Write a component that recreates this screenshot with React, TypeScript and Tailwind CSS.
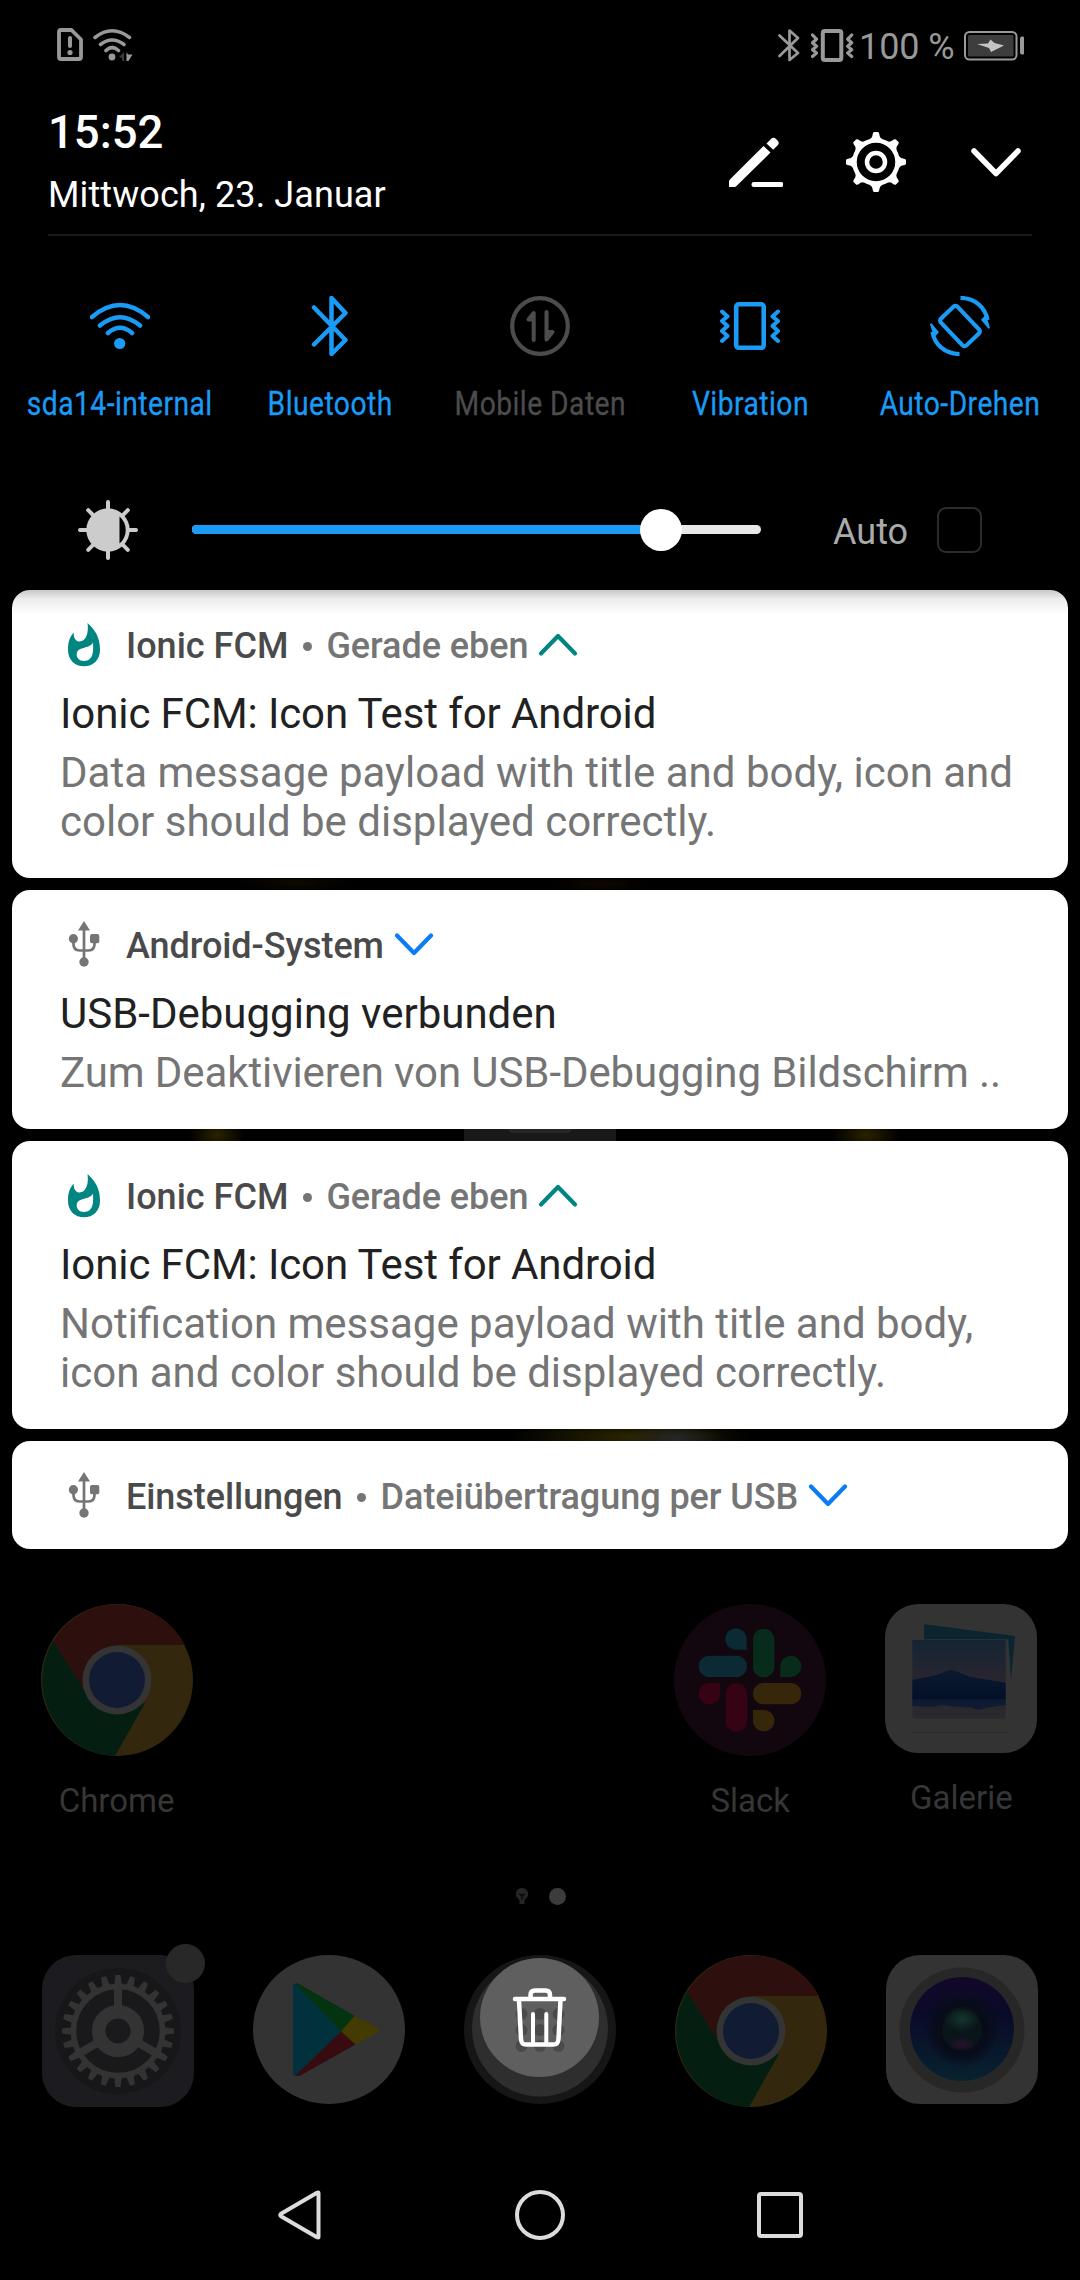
import React from "react";

function StatusBar() {
  return (
    <div className="flex h-[92px] shrink-0 items-center pl-[57px] pr-14 text-[#999]">
      <svg width="26" height="34" viewBox="57 28 26 34" fill="none" stroke="currentColor" className="-mt-0.5">
        <path d="M61 30h10.5L81 39.5V57a2 2 0 0 1-2 2H61a2 2 0 0 1-2-2V32a2 2 0 0 1 2-2z" strokeWidth="3.8" strokeLinejoin="round" />
        <path d="M70 38v8" strokeWidth="4" strokeLinecap="round" />
        <circle cx="70" cy="52.5" r="2.6" fill="currentColor" stroke="none" />
      </svg>
      <svg width="40" height="34" viewBox="93 28 40 34" fill="none" stroke="currentColor" strokeWidth="3.6" strokeLinecap="round" className="-mt-0.5 ml-2.5">
        <path d="M95 37.500Q112 24 129.500 37.500M100.500 44.500Q112 35.500 124 44.500M106 50.500Q112 44.500 118.500 50.500" />
        <circle cx="112" cy="57" r="3.400" fill="currentColor" stroke="none" />
        <path d="M124 52v9h-2v-3l-3-1z" fill="#3a3a3a" stroke="none" />
        <path d="M126.500 52.500l1.800 2h4.200l-4 6.500h-2z" fill="currentColor" stroke="none" />
      </svg>
      <div className="ml-auto flex items-center">
        <svg width="22" height="34" viewBox="778 28 22 34" fill="none" stroke="currentColor" strokeWidth="2.700" strokeLinejoin="round" strokeLinecap="round" className="-mt-0.5">
          <path d="M779.500 35.500L798 53l-8.500 7V30.500L798 38l-18.500 18" />
        </svg>
        <svg width="43" height="34" viewBox="811 28 43 34" fill="none" stroke="currentColor" strokeWidth="3.200" strokeLinecap="round" strokeLinejoin="round" className="-mt-0.5 ml-[11px]">
          <rect x="822.800" y="31" width="18.500" height="29" rx="2" strokeWidth="4" />
          <path d="M812.500 35l4 4.200-4 3.500 4 3.600-4 3.500 4 3.200-4 3.500M851.700 35l-4 4.200 4 3.500-4 3.600 4 3.500-4 3.200 4 3.500" />
        </svg>
        <span className="ml-[5px] w-[105px] whitespace-nowrap pt-0.5 text-[36px] leading-[48px] tracking-[-0.1px]">100 %</span>
        <svg width="60" height="30" viewBox="964 31 60 30" fill="none">
          <rect x="965" y="32" width="51.500" height="27.500" rx="4.500" stroke="currentColor" strokeWidth="2" />
          <rect x="968" y="35" width="45.500" height="21.500" rx="1.500" fill="#3d3d3d" />
          <path d="M977 44l11-.5 2.500-4 4 3.500 9.500 2.500-13 6.500-2-4z" fill="#c4c4c4" />
          <rect x="1020" y="36.500" width="4.500" height="18" rx="2" fill="currentColor" />
        </svg>
      </div>
    </div>
  );
}

function Header() {
  return (
    <div className="mx-12 flex h-[144px] shrink-0 border-b-2 border-[#1a1a1a] text-white">
      <div className="pt-[13px]">
        <div className="text-[45.500px] font-medium leading-[56px]">15:52</div>
        <div className="mt-2.5 whitespace-nowrap text-[36px] leading-[48px] tracking-[0.1px]">Mittwoch, 23. Januar</div>
      </div>
      <div className="ml-auto mr-[11px] mt-9 flex h-[68px]">
        <svg width="54" height="68" viewBox="729 128 54 68" fill="currentColor">
          <path d="M763.500 146l7 6.500-34 33.500a3 3 0 0 1-2 .9h-5.500v-5.500a3 3 0 0 1 .9-2z" />
          <path d="M766.500 143.500l4.500-4.500a3.500 3.500 0 0 1 5 0l1.500 1.500a3.500 3.500 0 0 1 0 5l-4.300 4.300z" />
          <rect x="751.500" y="182" width="32" height="5" rx="2.300" />
        </svg>
        <svg width="60" height="68" viewBox="846 128 60 68" className="ml-[63px]">
          <g fill="currentColor">
            {[0, 45, 90, 135, 180, 225, 270, 315].map((a) => (
              <path key={a} transform={`rotate(${a} 876 162)`} d="M868.500 139.500q4-1 4.200-5.500l.5-1.200a1 1 0 0 1 1-.8h3.600a1 1 0 0 1 1 .8l.5 1.200q.2 4.500 4.200 5.500z" />
            ))}
          </g>
          <circle cx="876" cy="162" r="21.500" fill="#000" stroke="currentColor" strokeWidth="4.500" />
          <circle cx="876" cy="162" r="9" fill="none" stroke="currentColor" strokeWidth="4.500" />
        </svg>
        <svg width="50" height="68" viewBox="971 128 50 68" fill="none" stroke="currentColor" strokeWidth="5.500" strokeLinecap="round" strokeLinejoin="round" className="ml-[65px]">
          <path d="M974 151l22 22.500L1018 151" />
        </svg>
      </div>
    </div>
  );
}

const tiles = [
  {
    label: "sda14-internal",
    on: true,
    icon: (
      <svg width="60" height="60" viewBox="90 296 60 60" fill="none" stroke="currentColor" strokeWidth="4.500" strokeLinecap="round">
        <path d="M92 317Q120 293 148 317M100 325.500Q120 309 140 325.500M108 333Q120 322.500 132 333" />
        <circle cx="119.700" cy="343.500" r="5.600" fill="currentColor" stroke="none" />
      </svg>
    ),
  },
  {
    label: "Bluetooth",
    on: true,
    icon: (
      <svg width="60" height="60" viewBox="300 296 60 60" fill="none" stroke="currentColor" strokeWidth="4.500" strokeLinecap="round" strokeLinejoin="round">
        <path d="M314 307.500L345.500 340l-14 14V298l14 15L314 344.500" />
      </svg>
    ),
  },
  {
    label: "Mobile Daten",
    on: false,
    icon: (
      <svg width="60" height="60" viewBox="510 296 60 60" fill="none" stroke="currentColor" strokeWidth="4" strokeLinecap="round" strokeLinejoin="round">
        <circle cx="540" cy="326" r="27.800" strokeWidth="4.200" />
        <path d="M533.700 340v-27l-5.200 6.500h5M546.500 312v27.500l6-7.500h-6" />
      </svg>
    ),
  },
  {
    label: "Vibration",
    on: true,
    icon: (
      <svg width="60" height="60" viewBox="720 296 60 60" fill="none" stroke="currentColor" strokeWidth="4" strokeLinecap="round" strokeLinejoin="round">
        <rect x="736.200" y="304.300" width="27.500" height="43.500" rx="2.500" strokeWidth="4.600" />
        <path d="M722 311.500l5.500 5-5.500 4.500 5.500 5-5.500 5 5.500 5-5.500 5M778 311.500l-5.500 5 5.500 4.500-5.500 5 5.500 5-5.500 5 5.500 5" />
      </svg>
    ),
  },
  {
    label: "Auto-Drehen",
    on: true,
    icon: (
      <svg width="60" height="60" viewBox="930 296 60 60" fill="none" stroke="currentColor" strokeWidth="4.200">
        <rect x="948.500" y="307.500" width="23" height="37" rx="3" transform="rotate(-43.500 960 326)" />
        <path d="M960.500 298c14.500 0 25 9.500 27 22M959.500 354c-14.500 0-25-9.500-27-22" />
        <path d="M986 314.500l4 13.500-1.500.8-7.500-9zM934 337.500l-4-13.500 1.500-.8 7.500 9z" fill="currentColor" stroke="none" />
      </svg>
    ),
  },
];

function QuickTiles() {
  return (
    <div className="grid shrink-0 grid-cols-5 px-[15px] pt-[60px]">
      {tiles.map((t) => (
        <div key={t.label} className={t.on ? "flex flex-col items-center text-[#1a9bf5]" : "flex flex-col items-center text-[#4c4c4c]"}>
          {t.icon}
          <span className="mt-7 origin-center scale-x-[0.855] whitespace-nowrap text-[33px] leading-10 tracking-[0.55px] [-webkit-text-stroke:0.3px_currentColor]">{t.label}</span>
        </div>
      ))}
    </div>
  );
}

function Brightness() {
  return (
    <div className="mb-[30px] mt-[76px] flex h-[60px] shrink-0 items-center pl-[78px]">
      <svg width="60" height="60" viewBox="78 500 60 60">
        <g stroke="#ccc" strokeWidth="4" strokeLinecap="round">
          {[0, 45, 90, 135, 180, 225, 270, 315].map((a) => (
            <path key={a} transform={`rotate(${a} 108 530)`} d="M108 502v8" />
          ))}
        </g>
        <circle cx="108" cy="530" r="21.700" fill="#ccc" />
        <path d="M119.500 516.500a17.700 17.700 0 0 1 0 27z" fill="#000" />
      </svg>
      <div className="relative -mt-px ml-[54px] h-[9px] w-[569px] rounded-full bg-[#e8e8e8]">
        <div className="h-full w-[469px] rounded-full bg-[#1a9bf5]" />
        <div className="absolute left-[448px] top-[-16px] size-[42px] rounded-full bg-white" />
      </div>
      <span className="ml-[72px] w-[104px] pt-[3px] text-[36px] leading-[48px] text-[#aaa]">Auto</span>
      <div className="h-[46px] w-[45px] rounded-[9px] border-2 border-[#2c2c2c]" />
    </div>
  );
}

function Flame() {
  return (
    <svg width="32" height="44" viewBox="68 623 32 44" className="-mt-0.5">
      <path d="M87.500 623C99 633 100 643 100 650c0 10-7 16.300-16 16.300S68 660 68 650c0-7 1-12 5.700-17.500C73.500 637 75 641 79 641.500c7 .5 10-9 8.500-18.500z" fill="#008581" />
      <path d="M93 642.500c.5 9 .5 18-9 18.500-5 0-7.600-3.500-7.300-7 .8-8 12.300-4.500 16.300-11.500z" fill="#fff" />
    </svg>
  );
}

function Usb() {
  return (
    <svg width="32" height="48" viewBox="68 920 32 48" fill="#757575" className="-mt-1">
      <path d="M84 921l6 9.500H78z" />
      <path d="M84 928v34M73.500 939v5q0 6.500 6 6.500h9q6 0 6-6.500v-5" fill="none" stroke="#757575" strokeWidth="2.700" />
      <circle cx="84" cy="962" r="4.700" />
      <circle cx="73.400" cy="938.700" r="4.600" />
      <rect x="90" y="934" width="9.300" height="9.300" rx="2" />
    </svg>
  );
}

function Chevron({ up }: { up?: boolean }) {
  return (
    <svg width="40" height="24" viewBox="0 0 40 24" fill="none" stroke={up ? "#008581" : "#0a7cf5"} strokeWidth="4.200" strokeLinecap="round" strokeLinejoin="round" className="-mt-0.5 ml-2.5">
      <path d={up ? "M3 20.500L20 3l17 17.500" : "M3 2.500L20 20 37 2.500"} />
    </svg>
  );
}

type NoteProps = { icon: React.ReactNode; app: string; info?: string; up?: boolean; title?: string; lines?: string[]; shaded?: boolean; tight?: boolean };

function Note({ icon, app, info, up, title, lines, shaded, tight }: NoteProps) {
  return (
    <div
      className={
        shaded
          ? "mx-3 shrink-0 rounded-[18px] bg-white bg-[linear-gradient(#c8c8c8,#ececec_9px,#fff_24px)] px-12 pb-8 pt-8"
          : title
            ? "mx-3 shrink-0 rounded-[18px] bg-white px-12 pb-8 pt-8"
            : "mx-3 shrink-0 rounded-[18px] bg-white px-12 pb-7 pt-8"
      }
    >
      <div className="flex h-12 items-center whitespace-nowrap pl-2 text-[36px] font-medium leading-[48px] text-[#757575]">
        {icon}
        <span className={up ? "ml-[26px] text-[#4a4a4a]" : "ml-[26px] tracking-[-0.07px] text-[#4a4a4a]"}>{app}</span>
        {info && <span className="mx-[14.500px] size-[9px] rounded-full bg-[#757575]" />}
        {info && <span className="tracking-[-0.06px]">{info}</span>}
        <Chevron up={up} />
      </div>
      {title && (
        <div className={up ? "mt-4 whitespace-nowrap text-[42px] leading-[56px] tracking-[-0.1px] text-[#212121]" : "mt-4 whitespace-nowrap text-[42px] leading-[56px] text-[#212121]"}>{title}</div>
      )}
      {lines && (
        <div className={tight ? "mt-1.5 whitespace-nowrap text-[42px] leading-[49px] tracking-[-0.09px] text-[#757575]" : "mt-1.5 whitespace-nowrap text-[42px] leading-[49px] text-[#757575]"}>
          {lines.map((l) => (
            <div key={l}>{l}</div>
          ))}
        </div>
      )}
    </div>
  );
}

function Notifications() {
  return (
    <div className="flex shrink-0 flex-col">
      <Note shaded up icon={<Flame />} app="Ionic FCM" info="Gerade eben" title="Ionic FCM: Icon Test for Android" lines={["Data message payload with title and body, icon and", "color should be displayed correctly."]} />
      <div className="h-3 bg-[radial-gradient(ellipse_60px_10px_at_295px_4px,#0e0900,transparent),radial-gradient(ellipse_50px_10px_at_600px_6px,#0e0700,transparent)]" />
      <Note tight icon={<Usb />} app="Android-System" title="USB-Debugging verbunden" lines={["Zum Deaktivieren von USB-Debugging Bildschirm .."]} />
      <div className="flex h-3 justify-center bg-[radial-gradient(ellipse_28px_18px_at_217px_6px,#2a2200,transparent),radial-gradient(ellipse_34px_18px_at_866px_6px,#2a2200,transparent)]">
        <div className="flex w-[152px] justify-center bg-[#191919]">
          <div className="h-1 w-[62px] rounded-b bg-[#262626]" />
        </div>
      </div>
      <Note up icon={<Flame />} app="Ionic FCM" info="Gerade eben" title="Ionic FCM: Icon Test for Android" lines={["Notification message payload with title and body,", "icon and color should be displayed correctly."]} />
      <div className="h-3 bg-[radial-gradient(ellipse_50px_14px_at_675px_9px,#262626,transparent),radial-gradient(ellipse_120px_22px_at_630px_8px,#2a2500,transparent)]" />
      <Note icon={<Usb />} app="Einstellungen" info="Dateiübertragung per USB" />
    </div>
  );
}

function Chrome() {
  return (
    <svg width="152" height="152" viewBox="-76 -76 152 152">
      <circle r="76" fill="#33270d" />
      <path d="M-64-39A76 76 0 0 1 68-35H0L-34 8z" fill="#2d0f0e" />
      <path d="M-64-39A76 76 0 0 0-2 76L28 23-17 30-34 8z" fill="#041f12" />
      <circle r="34.500" fill="#343434" />
      <circle r="28" fill="#111b33" />
    </svg>
  );
}

function Slack() {
  return (
    <svg width="152" height="152" viewBox="102 72 456 456">
      <circle cx="330" cy="300" r="228" fill="#12060f" />
      <g fill="#0b2a33">
        <path d="M320 209h-31a32 32 0 1 1 31-32z" />
        <rect x="176" y="227" width="145" height="64" rx="32" />
      </g>
      <g fill="#072c1b">
        <rect x="339" y="146" width="64" height="146" rx="32" />
        <path d="M421 291v-32a31.500 32 0 1 1 31 32z" />
      </g>
      <g fill="#360314">
        <path d="M240 309v32a32 32 0 1 1-32-32z" />
        <rect x="257" y="309" width="64" height="146" rx="32" />
      </g>
      <g fill="#37270a">
        <rect x="339" y="309" width="145" height="64" rx="32" />
        <path d="M339 390h32a32 32 0 1 1-32 32z" />
      </g>
    </svg>
  );
}

function Gallery() {
  return (
    <svg width="152" height="149" viewBox="735 72 456 447">
      <defs>
        <linearGradient id="sky" x1="0" y1="0" x2="0" y2="1">
          <stop offset="0" stopColor="#142433" />
          <stop offset=".45" stopColor="#262530" />
          <stop offset="1" stopColor="#2b292c" />
        </linearGradient>
        <linearGradient id="hill" x1="0" y1="0" x2="0" y2="1">
          <stop offset="0" stopColor="#0c1a30" />
          <stop offset="1" stopColor="#020f26" />
        </linearGradient>
      </defs>
      <rect x="735" y="72" width="456" height="447" rx="100" fill="#333" />
      <path d="M852 133l273 35-12 132-8-122H852z" fill="#0a2430" />
      <path d="M817 457h285" stroke="#2b2b2b" strokeWidth="3" />
      <rect x="817" y="180" width="280" height="236" fill="url(#sky)" />
      <path d="M817 300l70-14c25-8 35-16 47-16s30 12 55 20l108 18v52H817z" fill="url(#hill)" />
      <path d="M817 358h280v17l-60 8c-15 8-30 6-40 0l-60-4-30-4-30 5-60-2z" fill="#0e1b33" />
    </svg>
  );
}

function AppIcon({ label, children }: { label: string; children: React.ReactNode }) {
  return (
    <div className="flex flex-col items-center">
      {children}
      <span className="mt-[25px] text-[33px] leading-10 text-[#363636]">{label}</span>
    </div>
  );
}

function HomeRow() {
  return (
    <div className="mt-[55px] grid h-[217px] shrink-0 grid-cols-5 items-start pl-[11px] pr-[13px]">
      <AppIcon label="Chrome"><Chrome /></AppIcon>
      <div />
      <div />
      <AppIcon label="Slack"><Slack /></AppIcon>
      <AppIcon label="Galerie"><Gallery /></AppIcon>
    </div>
  );
}

function PageDots() {
  return (
    <div className="mt-[67px] flex h-[17px] shrink-0 items-center pl-[516px]">
      <svg width="12" height="17" viewBox="0 0 12 17">
        <path d="M6 0a6 6 0 0 1 4 10.500L8.500 12v4h-5v-4L2 10.500A6 6 0 0 1 6 0z" fill="#262626" />
        <path d="M6 12V8L4 6.500h4L6 8" stroke="#0a0a0a" strokeWidth="1.500" fill="none" />
      </svg>
      <div className="ml-[21px] size-[17px] rounded-full bg-[#3c3c3c]" />
    </div>
  );
}

function SettingsIcon() {
  return (
    <div className="relative">
      <svg width="152" height="152" viewBox="-76 -76 152 152">
        <rect x="-76" y="-76" width="152" height="152" rx="34" fill="#1c1c20" />
        <circle r="63" fill="#171719" />
        <circle r="49" fill="#19191b" />
        <g fill="#333">
          {Array.from({ length: 24 }, (_, i) => (
            <path key={i} transform={`rotate(${i * 15})`} d="M-4-45l1.500-11h5L4-45z" />
          ))}
          {[0, 120, 240].map((a) => (
            <rect key={a} transform={`rotate(${a})`} x="-4" y="-44" width="8" height="22" />
          ))}
        </g>
        <circle r="44.500" fill="none" stroke="#333" strokeWidth="5.500" />
        <circle r="19.300" fill="#1a1a1c" stroke="#333" strokeWidth="13.500" />
      </svg>
      <div className="absolute -top-[11px] left-[124px] size-[39px] rounded-full bg-[#282828]" />
    </div>
  );
}

function PlayIcon() {
  return (
    <svg width="152" height="149" viewBox="253 1955 152 149">
      <ellipse cx="329" cy="2029.500" rx="76" ry="74.500" fill="#333" />
      <path d="M293 1985q2-2.500 5-1l57 32-14 15.500-44 44.500q-4 0-4-3z" fill="#00313c" />
      <path d="M295 1983.500q2-.5 4 .5l55.500 32-13.500 15.500z" fill="#04340f" />
      <path d="M354.500 2016l22 11.500q4 2.500 0 5.500l-21 11.500-14.500-13z" fill="#433b02" />
      <path d="M341 2031.500l14.500 13-54 30.500q-3 1.500-6 .5z" fill="#380b11" />
    </svg>
  );
}

function TrashButton() {
  return (
    <svg width="152" height="149" viewBox="464 1955 152 149">
      <ellipse cx="540" cy="2029.500" rx="76" ry="74.500" fill="#161616" />
      <ellipse cx="540" cy="2028.500" rx="68" ry="68" fill="#2e2e2e" />
      <circle cx="539.500" cy="2017.500" r="59.500" fill="#5f5f5f" />
      <g fill="#4a4a4a">
        {[2014, 2030, 2046].map((y) => [521.5, 540, 558.5].map((x) => <circle key={`${x}-${y}`} cx={x} cy={y} r="6" />))}
      </g>
      <g fill="none" stroke="#fff" strokeLinecap="round" strokeLinejoin="round">
        <path d="M515 1999h49M530.500 1999v-4q0-4.500 4.500-4.500h10.500q4.500 0 4.500 4.500v4M519 2000l2 39q.3 5.500 5 5.500h27.500q4.700 0 5-5.500l2-39" strokeWidth="4.500" />
        <path d="M533 2014v29M546.300 2014v29" strokeWidth="4" />
      </g>
    </svg>
  );
}

function CameraIcon() {
  return (
    <svg width="152" height="149" viewBox="-76 -74 152 149">
      <defs>
        <linearGradient id="lens" x1="0" y1="0" x2="0" y2="1">
          <stop offset="0" stopColor="#12082a" />
          <stop offset=".35" stopColor="#0a0a28" />
          <stop offset="1" stopColor="#07222f" />
        </linearGradient>
        <radialGradient id="depth">
          <stop offset="0" stopColor="#080c14" />
          <stop offset=".7" stopColor="#080c1a" />
          <stop offset="1" stopColor="#080c1a" stopOpacity="0" />
        </radialGradient>
        <radialGradient id="glow-green">
          <stop offset="0" stopColor="#14352c" />
          <stop offset="1" stopColor="#14352c" stopOpacity="0" />
        </radialGradient>
        <radialGradient id="glow-pink">
          <stop offset="0" stopColor="#2c1030" />
          <stop offset="1" stopColor="#2c1030" stopOpacity="0" />
        </radialGradient>
      </defs>
      <rect x="-76" y="-74" width="152" height="149" rx="34" fill="#333" />
      <circle cy="1" r="62.500" fill="#272727" />
      <circle r="52" fill="url(#lens)" />
      <circle r="38" fill="url(#depth)" />
      <circle r="20" cy="1" fill="#0a1519" />
      <ellipse cy="-10" rx="18" ry="13" fill="url(#glow-green)" />
      <ellipse cy="15" rx="14" ry="7" fill="url(#glow-pink)" />
    </svg>
  );
}

function Dock() {
  return (
    <div className="mt-[50px] grid h-[152px] shrink-0 grid-cols-5 items-start justify-items-center px-3">
      <SettingsIcon />
      <PlayIcon />
      <TrashButton />
      <Chrome />
      <CameraIcon />
    </div>
  );
}

function NavBar() {
  return (
    <div className="mt-[82px] flex h-[52px] shrink-0 items-center pl-[277px]">
      <svg width="46" height="52" viewBox="277 2189 46 52" fill="none" stroke="#dcdcdc" strokeWidth="4" strokeLinejoin="round">
        <path d="M318.500 2193v44q0 1-1.500.3l-36-21q-1.500-1.300 0-2.600l36-21q1.500-.7 1.500.3z" />
      </svg>
      <div className="ml-[192px] size-[50px] rounded-full border-4 border-[#dcdcdc]" />
      <div className="ml-[192px] size-[46px] rounded-[4px] border-4 border-[#dcdcdc]" />
    </div>
  );
}

export default function App() {
  return (
    <div className="flex h-[2280px] w-[1080px] flex-col overflow-hidden bg-black font-['Roboto',sans-serif]">
      <StatusBar />
      <Header />
      <QuickTiles />
      <Brightness />
      <Notifications />
      <HomeRow />
      <PageDots />
      <Dock />
      <NavBar />
    </div>
  );
}
